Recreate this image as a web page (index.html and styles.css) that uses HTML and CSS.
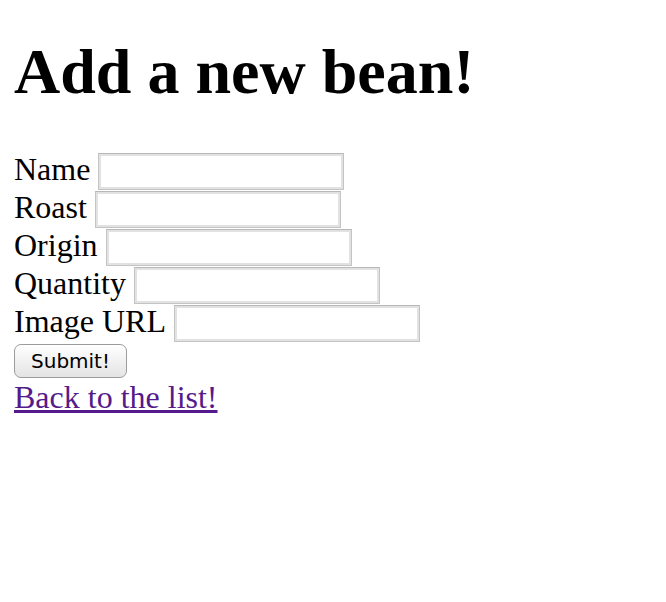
FILE: index.html
```html
<!DOCTYPE html>
<html>
<head>
<meta charset="utf-8">
<link rel="stylesheet" href="styles.css">
<title>Add a new bean!</title>
</head>
<body>
<h1 class="title">Add a new bean!</h1>
<form class="bean-form">
  <div class="row"><label class="lbl">Name</label><input class="field" type="text"></div>
  <div class="row"><label class="lbl">Roast</label><input class="field" type="text"></div>
  <div class="row"><label class="lbl">Origin</label><input class="field" type="text"></div>
  <div class="row"><label class="lbl">Quantity</label><input class="field" type="text"></div>
  <div class="row"><label class="lbl">Image URL</label><input class="field" type="text"></div>
  <div class="btn-row"><button class="submit" type="button">Submit!</button></div>
</form>
<a class="back" href="#">Back to the list!</a>
</body>
</html>
```
FILE: styles.css
```css
html, body {
  margin: 0;
  padding: 0;
  background: #fff;
}
body {
  padding: 0 14px;
  font-family: "Liberation Serif", "Times New Roman", serif;
  font-size: 32px;
  color: #000;
}
.title {
  font-size: 64px;
  font-weight: bold;
  line-height: 74px;
  margin: 35px 0 43px;
}
.bean-form {
  display: flex;
  flex-direction: column;
}
.row {
  display: flex;
  align-items: center;
  gap: 8px;
  height: 38px;
}
.lbl {
  line-height: 37px;
  position: relative;
  top: -2px;
}
.field {
  box-sizing: border-box;
  width: 246px;
  height: 37px;
  margin: 0;
  border: 1px solid #c4c4c4;
  border-top-color: #b8b8b8;
  box-shadow: inset 0 0 0 2px #e2e2e2;
  background: #fff;
  padding: 0 4px;
  outline: none;
}
.btn-row {
  display: flex;
  padding-top: 2px;
  height: 34px;
}
.submit {
  box-sizing: border-box;
  width: 113px;
  height: 34px;
  margin: 0;
  border: 1px solid #9c9c9c;
  border-radius: 7px;
  background: linear-gradient(#ffffff, #f1f1f1 50%, #e4e4e4);
  font-family: "DejaVu Sans", "Liberation Sans", sans-serif;
  font-size: 20px;
  color: #000;
  padding: 0;
}
.back {
  display: inline-block;
  color: #551a8b;
  text-decoration: underline;
  line-height: 37px;
  margin-top: 1px;
}
```
